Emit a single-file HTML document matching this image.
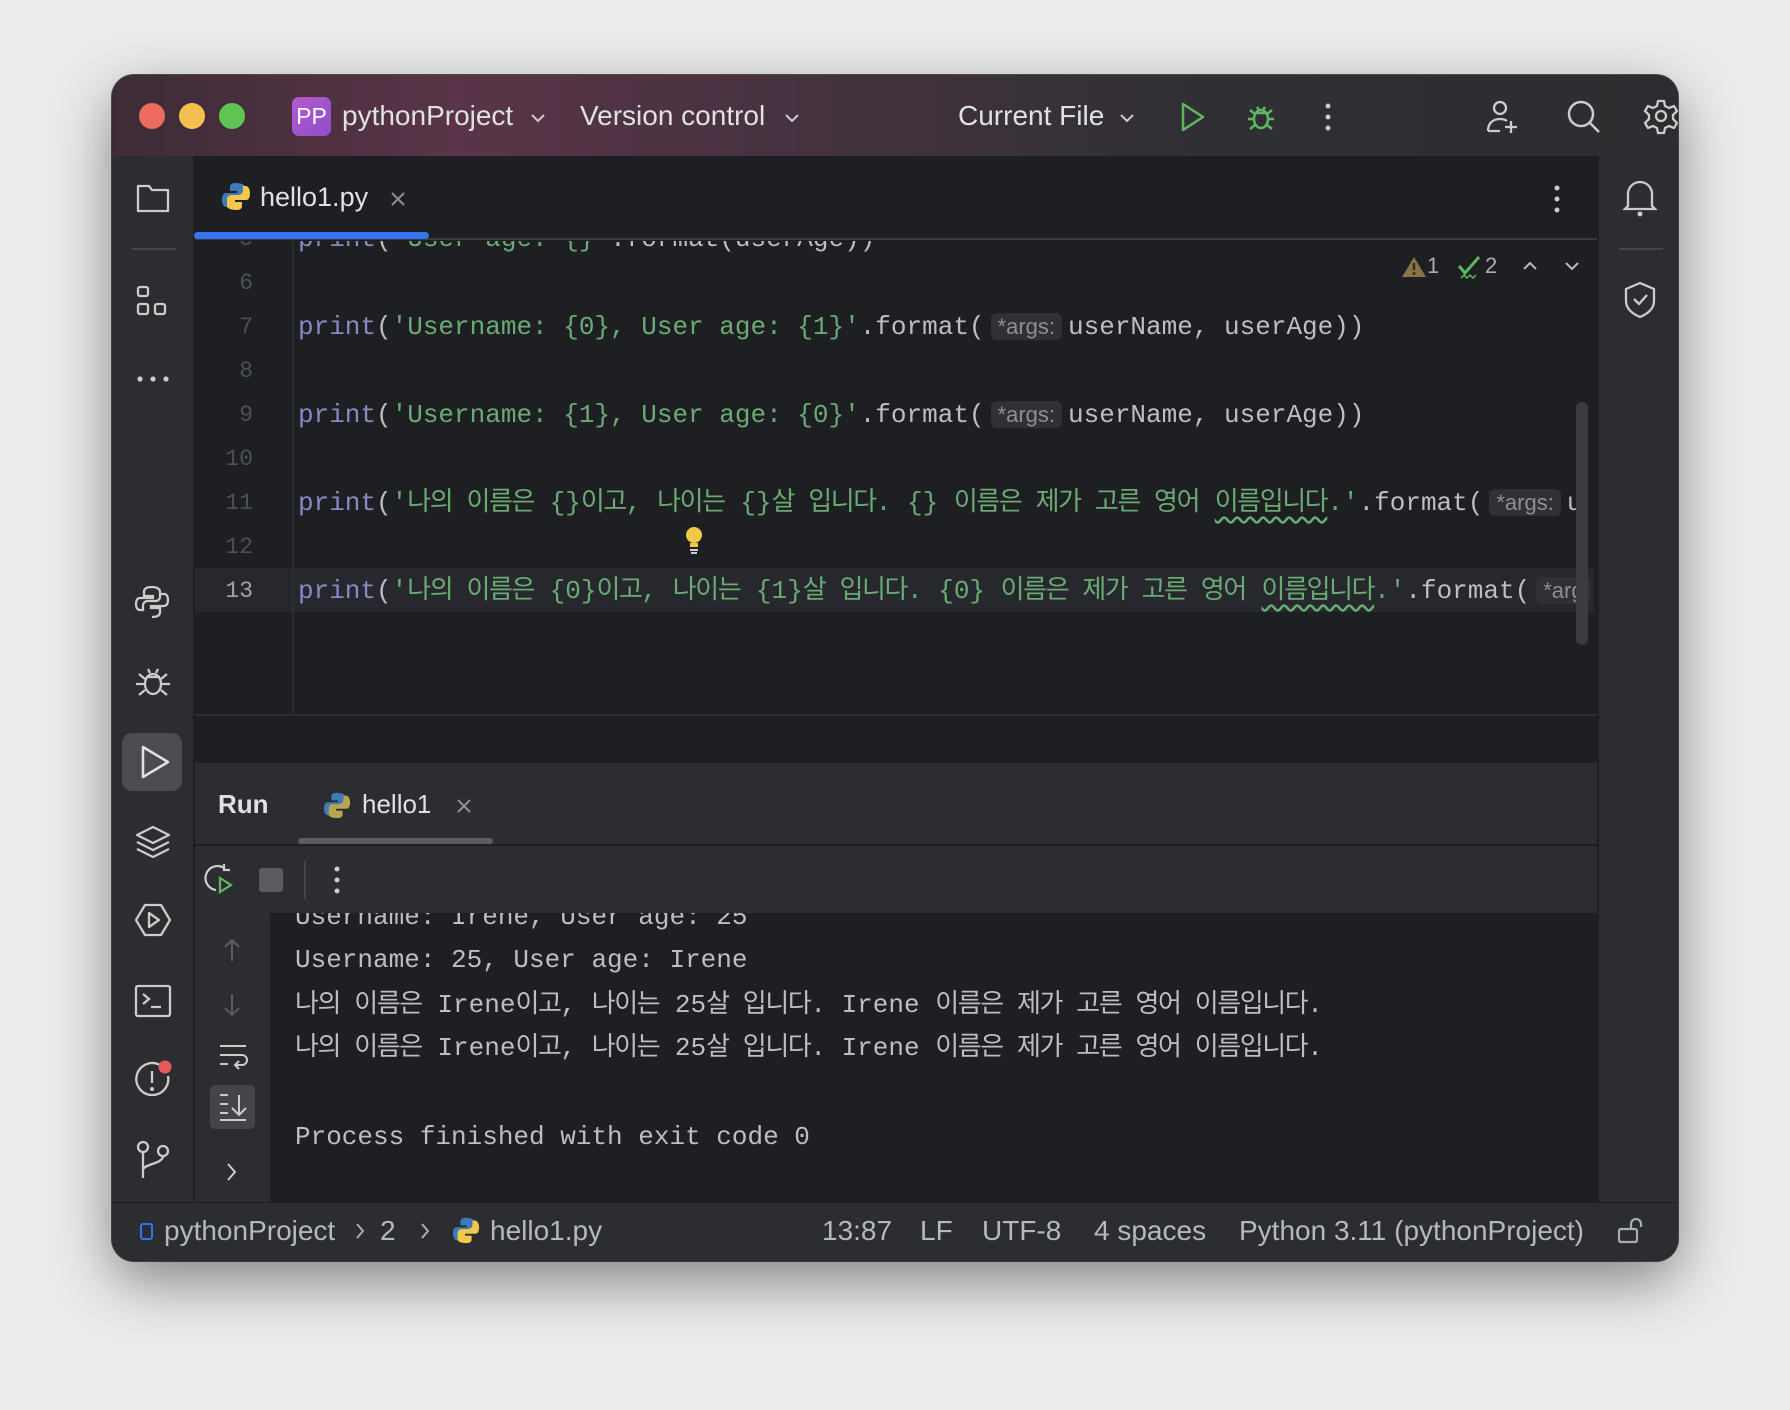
<!DOCTYPE html>
<html><head><meta charset="utf-8"><style>
*{margin:0;padding:0;box-sizing:border-box}
body{width:1790px;height:1410px;background:#ececec;position:relative;overflow:hidden;font-family:"Liberation Sans","Noto Sans CJK KR",sans-serif;color:#dfe1e5}
.win{position:absolute;left:112px;top:75px;width:1566px;height:1186px;border-radius:22px;overflow:hidden;background:#1e1f22;box-shadow:0 20px 60px rgba(0,0,0,.45),0 0 0 1px #555}
.a{position:absolute}
.title{left:0;top:0;width:1566px;height:81px;background:linear-gradient(90deg,#3d2c38 0%,#5a3448 22%,#44323f 45%,#2f3034 70%,#2b2d30 100%)}
.tl{width:26px;height:26px;border-radius:50%;top:28px}
.ui{font-size:28px;color:#dfe1e5;white-space:nowrap}
.mono{font-family:"Liberation Mono","Noto Sans CJK KR",monospace;font-size:26px;white-space:pre;line-height:30px}
.ln{width:58px;text-align:right;left:0;color:#4b5059;font-family:"Liberation Mono",monospace;font-size:23px;line-height:27px}
.code{left:103px;color:#bcbec4}
.p{color:#8888c6}.s{color:#6aab73}
.k{letter-spacing:-1.4px}
.hint{background:#2f3135;color:#8c8f96;font-family:"Liberation Sans",sans-serif;font-size:22px;border-radius:6px;padding:1px 7px;margin:0 6px;letter-spacing:0}
.wv{text-decoration:underline wavy #6aab73;text-underline-offset:6px}
svg{position:absolute;overflow:visible}
.out{left:25px;color:#bcbec4}
.st{color:#b4b8bf}
</style></head><body>
<div class="win">
 <div class="a title"></div>
 <div class="a tl" style="left:27px;background:#ed6a5e"></div>
 <div class="a tl" style="left:67px;background:#f5bf4f"></div>
 <div class="a tl" style="left:107px;background:#61c554"></div>
 <div class="a" style="left:180px;top:22px;width:39px;height:39px;border-radius:7px;background:linear-gradient(135deg,#b55ad0,#8e4fc8);color:#fff;font-size:23px;line-height:39px;text-align:center">PP</div>
 <div class="a ui" style="left:230px;top:25px">pythonProject</div>
 <svg style="left:418px;top:38px" width="16" height="10"><path d="M2 2l6 6 6-6" stroke="#ccc" stroke-width="2" fill="none"/></svg>
 <div class="a ui" style="left:468px;top:25px">Version control</div>
 <svg style="left:672px;top:38px" width="16" height="10"><path d="M2 2l6 6 6-6" stroke="#ccc" stroke-width="2" fill="none"/></svg>
 <div class="a ui" style="left:846px;top:25px">Current File</div>
 <svg style="left:1007px;top:38px" width="16" height="10"><path d="M2 2l6 6 6-6" stroke="#ccc" stroke-width="2" fill="none"/></svg>
 <svg style="left:1068px;top:27px" width="26" height="30"><path d="M3 2l20 13-20 13z" stroke="#5fb860" stroke-width="2.5" fill="none" stroke-linejoin="round"/></svg>
 <svg style="left:1133px;top:26px" width="32" height="32"><g stroke="#5fb860" stroke-width="2.5" fill="none"><ellipse cx="16" cy="18" rx="7" ry="9"/><path d="M10 12h12M3 18h6M23 18h6M5 9l5 4M27 9l-5 4M5 28l5-4M27 28l-5-4M12 6l2 3M20 6l-2 3"/></g></svg>
 <svg style="left:1213px;top:28px" width="6" height="28"><circle cx="3" cy="3" r="2.5" fill="#ccc"/><circle cx="3" cy="14" r="2.5" fill="#ccc"/><circle cx="3" cy="25" r="2.5" fill="#ccc"/></svg>
 <svg style="left:1373px;top:24px" width="36" height="36"><g stroke="#ccc" stroke-width="2.3" fill="none"><circle cx="15" cy="9" r="6"/><path d="M3 32c0-8 5-12 12-12 3 0 5 .5 7 2M3 32h12M26 22v12M20 28h12"/></g></svg>
 <svg style="left:1454px;top:24px" width="36" height="36"><g stroke="#ccc" stroke-width="2.5" fill="none"><circle cx="15" cy="15" r="12"/><path d="M24 24l9 9"/></g></svg>
 <svg style="left:1532px;top:24px" width="36" height="36"><g stroke="#ccc" stroke-width="2.3" fill="none"><circle cx="17" cy="17" r="5"/><path d="M14 2h6l1 5 4 2 5-2 3 5-4 4v4l4 4-3 5-5-2-4 2-1 5h-6l-1-5-4-2-5 2-3-5 4-4v-4l-4-4 3-5 5 2 4-2z"/></g></svg>

 <div class="a" style="left:0;top:81px;width:82px;height:1046px;background:#2b2d30;border-right:1px solid #1e1f22"></div>
 <div class="a" style="left:1486px;top:81px;width:80px;height:1046px;background:#2b2d30;border-left:1px solid #1e1f22"></div>
 <svg style="left:24px;top:108px" width="34" height="30"><path d="M2 3h11l3 4h16v21H2z" stroke="#ccc" stroke-width="2.3" fill="none" stroke-linejoin="round"/></svg>
 <div class="a" style="left:20px;top:173px;width:44px;height:2px;background:#43454a"></div>
 <svg style="left:24px;top:210px" width="34" height="34"><g stroke="#ccc" stroke-width="2.3" fill="none"><rect x="2" y="2" width="10" height="9" rx="2"/><rect x="2" y="19" width="10" height="10" rx="2"/><rect x="19" y="19" width="10" height="10" rx="2"/></g></svg>
 <svg style="left:24px;top:301px" width="34" height="6"><circle cx="4" cy="3" r="2.6" fill="#ccc"/><circle cx="17" cy="3" r="2.6" fill="#ccc"/><circle cx="30" cy="3" r="2.6" fill="#ccc"/></svg>
 <svg style="left:22px;top:509px" width="36" height="36"><g stroke="#ccc" stroke-width="2.3" fill="none"><path d="M18 3c-6 0-8 2-8 5v4h9v2H6c-3 0-4 3-4 6s1 6 4 6h3v-4c0-3 2-5 5-5h8c2 0 4-2 4-4V8c0-3-3-5-8-5z"/><path d="M18 33c6 0 8-2 8-5v-4h-9v-2h13c3 0 4-3 4-6s-1-6-4-6h-3"/></g></svg>
 <svg style="left:22px;top:589px" width="38" height="36"><g stroke="#ccc" stroke-width="2.3" fill="none"><ellipse cx="19" cy="20" rx="8" ry="10"/><path d="M12 13h14M2 20h8M28 20h8M5 10l6 5M33 10l-6 5M5 31l6-5M33 31l-6-5M14 5l2 4M24 5l-2 4"/></g></svg>
 <div class="a" style="left:10px;top:658px;width:60px;height:58px;border-radius:10px;background:#4a4c51"></div>
 <svg style="left:28px;top:670px" width="30" height="34"><path d="M3 2l25 15L3 32z" stroke="#dfe1e5" stroke-width="2.5" fill="none" stroke-linejoin="round"/></svg>
 <svg style="left:22px;top:750px" width="38" height="32"><g stroke="#ccc" stroke-width="2.3" fill="none" stroke-linejoin="round"><path d="M19 2L3 10l16 8 16-8z"/><path d="M3 17l16 8 16-8M3 24l16 8 16-8"/></g></svg>
 <svg style="left:22px;top:828px" width="38" height="34"><g stroke="#ccc" stroke-width="2.3" fill="none" stroke-linejoin="round"><path d="M11 2h16l9 15-9 15H11L2 17z"/><path d="M15 10l10 7-10 7z"/></g></svg>
 <svg style="left:22px;top:909px" width="38" height="34"><g stroke="#ccc" stroke-width="2.3" fill="none"><rect x="2" y="2" width="34" height="30" rx="2"/><path d="M9 10l6 5-6 5M17 23h10"/></g></svg>
 <svg style="left:22px;top:985px" width="40" height="40"><g stroke="#ccc" stroke-width="2.3" fill="none"><path d="M26 5A16 16 0 1 0 34 16"/><path d="M18 11v12"/></g><circle cx="18" cy="29" r="2" fill="#ccc"/><circle cx="31" cy="7" r="6.5" fill="#e55b5b"/></svg>
 <svg style="left:22px;top:1065px" width="38" height="40"><g stroke="#ccc" stroke-width="2.3" fill="none"><circle cx="9" cy="7" r="5"/><circle cx="29" cy="11" r="5"/><path d="M9 12v26M9 30c0-6 20-6 20-14"/></g></svg>

 <svg style="left:1511px;top:104px" width="34" height="38"><g stroke="#ccc" stroke-width="2.3" fill="none"><path d="M5 27V15a12 12 0 0 1 24 0v12l3 3H2z"/></g><circle cx="17" cy="35" r="2.5" fill="#ccc"/></svg>
 <div class="a" style="left:1507px;top:173px;width:44px;height:2px;background:#43454a"></div>
 <svg style="left:1511px;top:206px" width="34" height="38"><g stroke="#ccc" stroke-width="2.3" fill="none" stroke-linejoin="round"><path d="M17 2l14 6v12c0 8-7 13-14 16C10 33 3 28 3 20V8z"/><path d="M11 18l5 5 8-9"/></g></svg>

 <div class="a" style="left:83px;top:81px;width:1402px;height:84px;background:#1e1f22;border-bottom:2px solid #393b40"></div>
 <svg style="left:109px;top:106px" width="30" height="30" viewBox="0 0 30 30"><path d="M15 2c-6 0-6 3-6 4v4h7v2H5c-3 0-4 3-4 7s2 7 4 7h3v-4c0-3 2-5 5-5h7c2 0 4-2 4-4V6c0-2-3-4-9-4z" fill="#3d7ab8"/><path d="M15 29c6 0 6-3 6-4v-4h-7v-2h11c3 0 4-3 4-7s-2-7-4-7h-3v4c0 3-2 5-5 5H10c-2 0-4 2-4 4v7c0 2 3 4 9 4z" fill="#f2c84b"/></svg>
 <div class="a ui" style="left:148px;top:107px;font-size:27px">hello1.py</div>
 <svg style="left:278px;top:116px" width="16" height="16"><path d="M2 2l12 12M14 2L2 14" stroke="#8c8f96" stroke-width="2"/></svg>
 <div class="a" style="left:82px;top:157px;width:235px;height:7px;border-radius:4px;background:#3574f0"></div>
 <svg style="left:1442px;top:110px" width="6" height="28"><circle cx="3" cy="3" r="2.5" fill="#ccc"/><circle cx="3" cy="14" r="2.5" fill="#ccc"/><circle cx="3" cy="25" r="2.5" fill="#ccc"/></svg>

 <div class="a" style="left:83px;top:166px;width:1402px;height:474px;overflow:hidden">
  <div class="a" style="left:0;top:327px;width:1402px;height:44px;background:#26282e"></div>
  <div class="a" style="left:97px;top:0;width:2px;height:474px;background:#2b2d30"></div>
  <div class="a ln" style="top:-15px">5</div>
  <div class="a mono code" style="top:-17px"><span class="p">print</span>(<span class="s">'User age: {}'</span>.format(userAge))</div>
  <div class="a ln" style="top:29px">6</div>
  <div class="a ln" style="top:73px">7</div>
  <div class="a mono code" style="top:71px"><span class="p">print</span>(<span class="s">'Username: {0}, User age: {1}'</span>.format(<span class="hint">*args:</span>userName, userAge))</div>
  <div class="a ln" style="top:117px">8</div>
  <div class="a ln" style="top:161px">9</div>
  <div class="a mono code" style="top:159px"><span class="p">print</span>(<span class="s">'Username: {1}, User age: {0}'</span>.format(<span class="hint">*args:</span>userName, userAge))</div>
  <div class="a ln" style="top:205px">10</div>
  <div class="a ln" style="top:249px">11</div>
  <div class="a mono code" style="top:247px"><span class="p">print</span>(<span class="s">'<span class="k">나의 이름은</span> {}<span class="k">이고</span>, <span class="k">나이는</span> {}<span class="k">살 입니다</span>. {} <span class="k">이름은 제가 고른 영어</span> <span class="wv k">이름입니다</span>.'</span>.format(<span class="hint">*args:</span>u</div>
  <div class="a ln" style="top:293px">12</div>
  <div class="a ln" style="top:337px;color:#a1a3ab">13</div>
  <div class="a mono code" style="top:335px"><span class="p">print</span>(<span class="s">'<span class="k">나의 이름은</span> {0}<span class="k">이고</span>, <span class="k">나이는</span> {1}<span class="k">살 입니다</span>. {0} <span class="k">이름은 제가 고른 영어</span> <span class="wv k">이름입니다</span>.'</span>.format(<span class="hint">*arg</span></div>
  <div class="a" style="left:1399px;top:0;width:5px;height:474px;background:#1e1f22"></div>
  <svg style="left:489px;top:285px" width="20" height="30"><circle cx="10" cy="9" r="8" fill="#f2c84b"/><rect x="6" y="17" width="8" height="4" fill="#f2c84b"/><path d="M6 24h8M7 27h6" stroke="#ccc" stroke-width="2"/></svg>
 </div>
 <svg style="left:1289px;top:180px" width="26" height="24"><path d="M13 2L25 22H1z" fill="#8a7445"/><path d="M13 8v7" stroke="#2b2d30" stroke-width="2.5"/><circle cx="13" cy="18.5" r="1.5" fill="#2b2d30"/></svg>
 <div class="a ui" style="left:1315px;top:178px;font-size:22px;color:#a8adb5">1</div>
 <svg style="left:1344px;top:180px" width="28" height="26"><path d="M3 11l6 7L23 2" stroke="#5fb860" stroke-width="3" fill="none"/><path d="M5 23l3-3 3 3 3-3 3 3 3-3" stroke="#5fb860" stroke-width="1.5" fill="none"/></svg>
 <div class="a ui" style="left:1373px;top:178px;font-size:22px;color:#a8adb5">2</div>
 <svg style="left:1410px;top:186px" width="16" height="10"><path d="M2 8l6-6 6 6" stroke="#bbb" stroke-width="2" fill="none"/></svg>
 <svg style="left:1452px;top:186px" width="16" height="10"><path d="M2 2l6 6 6-6" stroke="#bbb" stroke-width="2" fill="none"/></svg>
 <div class="a" style="left:1464px;top:327px;width:12px;height:243px;border-radius:6px;background:#3a3c40"></div>

 <div class="a" style="left:83px;top:639px;width:1402px;height:2px;background:#2b2d30"></div>

 <div class="a" style="left:83px;top:688px;width:1402px;height:150px;background:#2b2d30"></div>
 <div class="a" style="left:83px;top:769px;width:1402px;height:2px;background:#1e1f22"></div>
 <div class="a ui" style="left:106px;top:714px;font-weight:bold;font-size:26px">Run</div>
 <svg style="left:211px;top:716px" width="28" height="28" viewBox="0 0 30 30"><path d="M15 2c-6 0-6 3-6 4v4h7v2H5c-3 0-4 3-4 7s2 7 4 7h3v-4c0-3 2-5 5-5h7c2 0 4-2 4-4V6c0-2-3-4-9-4z" fill="#3d7ab8"/><path d="M15 29c6 0 6-3 6-4v-4h-7v-2h11c3 0 4-3 4-7s-2-7-4-7h-3v4c0 3-2 5-5 5H10c-2 0-4 2-4 4v7c0 2 3 4 9 4z" fill="#b6a650"/></svg>
 <div class="a ui" style="left:250px;top:714px;font-size:26px">hello1</div>
 <svg style="left:344px;top:723px" width="16" height="16"><path d="M2 2l12 12M14 2L2 14" stroke="#8c8f96" stroke-width="2"/></svg>
 <div class="a" style="left:186px;top:763px;width:195px;height:6px;border-radius:3px;background:#5a5d63"></div>
 <svg style="left:94px;top:789px" width="32" height="32"><g fill="none" stroke="#ccc" stroke-width="2.2"><path d="M18 4A12 12 0 1 0 10 26"/><path d="M18 0v6h6" /></g><path d="M14 14l11 7-11 7z" stroke="#5fb860" stroke-width="2.2" fill="none"/></svg>
 <div class="a" style="left:147px;top:793px;width:24px;height:24px;border-radius:3px;background:#5a5c61"></div>
 <div class="a" style="left:192px;top:786px;width:2px;height:38px;background:#43454a"></div>
 <svg style="left:222px;top:790px" width="6" height="30"><circle cx="3" cy="4" r="2.5" fill="#ccc"/><circle cx="3" cy="15" r="2.5" fill="#ccc"/><circle cx="3" cy="26" r="2.5" fill="#ccc"/></svg>

 <div class="a" style="left:83px;top:838px;width:75px;height:289px;background:#2b2d30"></div>
 <svg style="left:110px;top:862px" width="20" height="26"><path d="M10 24V3M3 10l7-7 7 7" stroke="#5a5d63" stroke-width="2" fill="none"/></svg>
 <svg style="left:110px;top:917px" width="20" height="26"><path d="M10 2v21M3 16l7 7 7-7" stroke="#5a5d63" stroke-width="2" fill="none"/></svg>
 <svg style="left:106px;top:968px" width="30" height="26"><path d="M2 3h26M2 12h22a5 5 0 0 1 0 10h-6M21 18l-4 4 4 4M2 21h8" stroke="#ccc" stroke-width="2" fill="none"/></svg>
 <div class="a" style="left:98px;top:1010px;width:45px;height:44px;border-radius:5px;background:#43454a"></div>
 <svg style="left:106px;top:1017px" width="30" height="30"><path d="M2 3h8M2 12h8M2 21h8M2 28h26M21 3v20M14 16l7 7 7-7" stroke="#ccc" stroke-width="2" fill="none"/></svg>
 <svg style="left:114px;top:1087px" width="12" height="20"><path d="M2 2l7 8-7 8" stroke="#ccc" stroke-width="2" fill="none"/></svg>

 <div class="a" style="left:158px;top:838px;width:1327px;height:289px;overflow:hidden">
  <div class="a mono out" style="top:-11px">Username: Irene, User age: 25</div>
  <div class="a mono out" style="top:32px">Username: 25, User age: Irene</div>
  <div class="a mono out" style="top:77px"><span class="k">나의 이름은</span> Irene<span class="k">이고</span>, <span class="k">나이는</span> 25<span class="k">살 입니다</span>. Irene <span class="k">이름은 제가 고른 영어 이름입니다</span>.</div>
  <div class="a mono out" style="top:120px"><span class="k">나의 이름은</span> Irene<span class="k">이고</span>, <span class="k">나이는</span> 25<span class="k">살 입니다</span>. Irene <span class="k">이름은 제가 고른 영어 이름입니다</span>.</div>
  <div class="a mono out" style="top:209px">Process finished with exit code 0</div>
 </div>

 <div class="a" style="left:0;top:1127px;width:1566px;height:59px;background:#2b2d30;border-top:1px solid #1e1f22"></div>
 <div class="a" style="left:28px;top:1148px;width:13px;height:17px;border:2px solid #3574f0;border-radius:3px"></div>
 <div class="a ui st" style="left:52px;top:1140px">pythonProject</div>
 <svg style="left:243px;top:1147px" width="10" height="18"><path d="M2 2l6 7-6 7" stroke="#a8adb5" stroke-width="2" fill="none"/></svg>
 <div class="a ui st" style="left:268px;top:1140px">2</div>
 <svg style="left:308px;top:1147px" width="10" height="18"><path d="M2 2l6 7-6 7" stroke="#a8adb5" stroke-width="2" fill="none"/></svg>
 <svg style="left:340px;top:1141px" width="28" height="28" viewBox="0 0 30 30"><path d="M15 2c-6 0-6 3-6 4v4h7v2H5c-3 0-4 3-4 7s2 7 4 7h3v-4c0-3 2-5 5-5h7c2 0 4-2 4-4V6c0-2-3-4-9-4z" fill="#3d7ab8"/><path d="M15 29c6 0 6-3 6-4v-4h-7v-2h11c3 0 4-3 4-7s-2-7-4-7h-3v4c0 3-2 5-5 5H10c-2 0-4 2-4 4v7c0 2 3 4 9 4z" fill="#f2c84b"/></svg>
 <div class="a ui st" style="left:378px;top:1140px">hello1.py</div>
 <div class="a ui st" style="left:710px;top:1140px">13:87</div>
 <div class="a ui st" style="left:808px;top:1140px">LF</div>
 <div class="a ui st" style="left:870px;top:1140px">UTF-8</div>
 <div class="a ui st" style="left:982px;top:1140px">4 spaces</div>
 <div class="a ui st" style="left:1127px;top:1140px">Python 3.11 (pythonProject)</div>
 <svg style="left:1505px;top:1142px" width="28" height="28"><g stroke="#a8adb5" stroke-width="2.2" fill="none"><rect x="2" y="12" width="18" height="13" rx="2"/><path d="M14 12V7a5 5 0 0 1 10 0v3"/></g></svg>
</div>
</body></html>
